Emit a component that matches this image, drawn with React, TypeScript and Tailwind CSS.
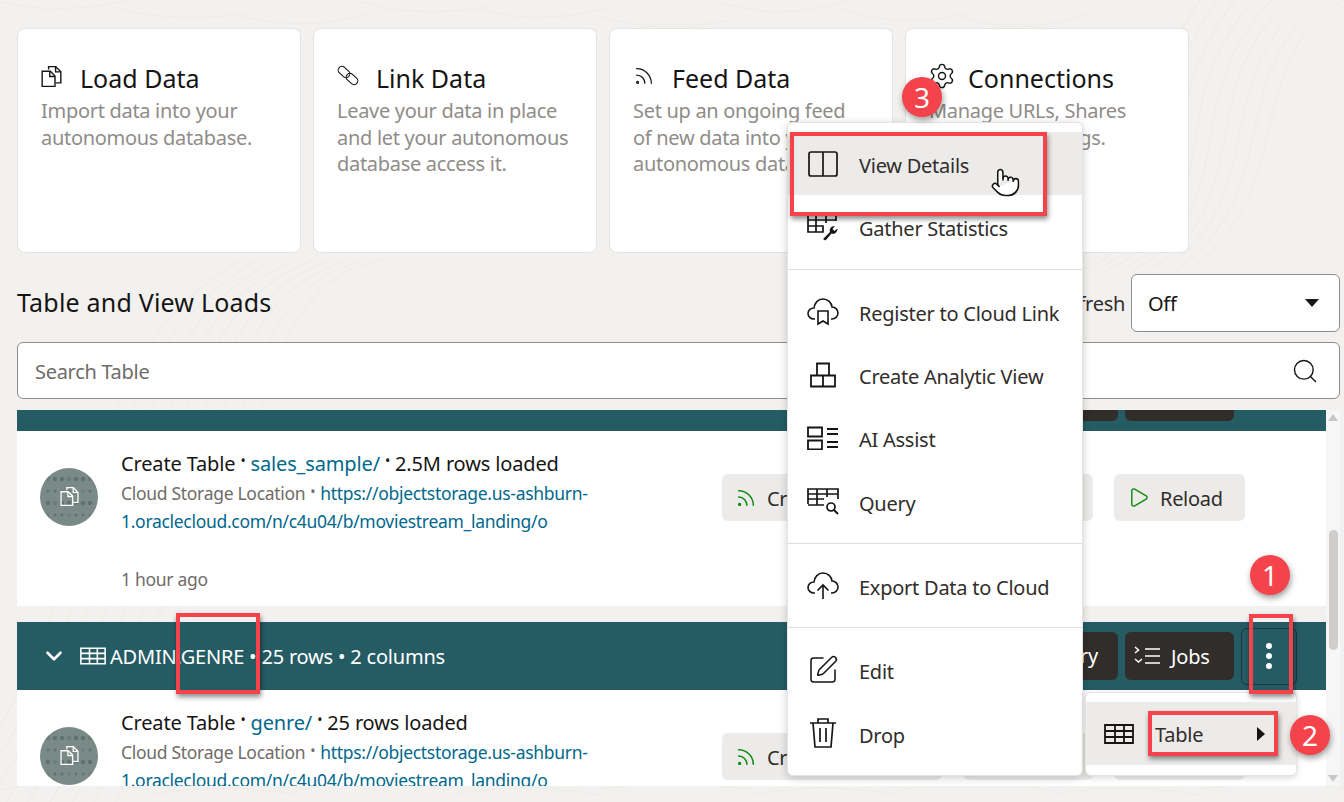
import React from "react";
import { Rss, Settings, SquarePen, Search, Play, ChevronDown, Pointer } from "lucide-react";

const Pages = ({ c = "currentColor", s = 22 }: { c?: string; s?: number }) => (
  <svg width={s} height={s} viewBox="2 2 17 18" fill="none" stroke={c} strokeWidth="1.200">
    <path d="M8 5V2.500h6l4.500 4.500v9.500H14" />
    <path d="M14 2.500V7h4.500" />
    <path d="M2.500 6.500h7l4 4v9h-11z" fill="none" />
    <path d="M9 6.500V11h4.500" />
  </svg>
);
const Link2 = () => (
  <svg width="24" height="24" viewBox="0 0 24 24" fill="none" stroke="#161513" strokeWidth="1.100">
    <rect x="0.500" y="4.250" width="13" height="7.500" rx="3.750" transform="rotate(42 7 8)" />
    <rect x="8.500" y="11.250" width="13" height="7.500" rx="3.750" transform="rotate(42 15 15)" />
  </svg>
);
const PanelIcon = () => (
  <svg width="30" height="26" viewBox="0 0 30 26" fill="none" stroke="#161513" strokeWidth="1.700">
    <rect x="1" y="1" width="28" height="24" rx="2" />
    <path d="M15 1v24" />
  </svg>
);
const TableWrench = () => (
  <svg width="32" height="30" viewBox="0 0 32 30" fill="none" stroke="#161513" strokeWidth="1.700">
    <path d="M1 14V2h28v7M1 8h28M1 14h15v6H1zM1 14v6M9 2v18M19 2v9" />
    <path d="M16 27l7-7c-1-3 1-6 5-6l-2.500 3 2 2 3-2.500c0 4-3 6-6 5l-6 7z" fill="#161513" stroke="none" />
  </svg>
);
const cloud = "M8 23H7C3.500 23 1 20.500 1 17.500S3.500 12 7 12c.5-5 4-9 9-9s8.500 3.500 9 8c3.500 0 6 3 6 6s-2.500 6-6 6h-1";
const CloudMark = () => (
  <svg width="32" height="30" viewBox="0 0 32 30" fill="none" stroke="#161513" strokeWidth="1.600">
    <path d={cloud} />
    <path d="M11 15h10v13l-5-3-5 3z" fill="#fff" />
  </svg>
);
const CloudUp = () => (
  <svg width="32" height="30" viewBox="0 0 32 30" fill="none" stroke="#161513" strokeWidth="1.600">
    <path d={cloud} />
    <path d="M16 29V15M10.500 20.500L16 15l5.500 5.500" />
  </svg>
);
const Blocks = () => (
  <svg width="26" height="26" viewBox="0 0 26 26" fill="none" stroke="#161513" strokeWidth="1.800">
    <path d="M7 1.500h12v12H7zM1 13.500h12v11H1zM13 13.500h12v11H13z" />
  </svg>
);
const AiIcon = () => (
  <svg width="32" height="24" viewBox="0 0 32 24" fill="none" stroke="#161513" strokeWidth="1.800">
    <path d="M1 1.500h14v9H1zM1 14.500h14v9H1z" />
    <path d="M20 3h11M20 8h11M20 16h11M20 21h11" />
  </svg>
);
const TableQuery = () => (
  <svg width="32" height="28" viewBox="0 0 32 28" fill="none" stroke="#161513" strokeWidth="1.700">
    <path d="M1 17V2h30v10M1 7h30M1 12h16M1 18h16M10 2v16M20 2v8" />
    <circle cx="24" cy="20" r="4" />
    <path d="M27 23l4 4" strokeWidth="2" />
  </svg>
);
const TrashIcon = () => (
  <svg width="28" height="32" viewBox="0 0 28 32" fill="none" stroke="#161513" strokeWidth="1.700">
    <path d="M1 6h26M9 6V2h10v4M4 6l2 24h16l2-24M11 11v14M17 11v14" />
  </svg>
);
const GridIcon = ({ c = "#161513", w = 30, h = 20 }: { c?: string; w?: number; h?: number }) => (
  <svg width={w} height={h} viewBox="0 0 30 20" fill="none" stroke={c} strokeWidth="1.800">
    <path d="M1 1h28v18H1zM1 7h28M1 13h28M11 1v18M20 1v18" />
  </svg>
);
const JobsIcon = () => (
  <svg width="26" height="22" viewBox="0 0 26 22" fill="none" stroke="#fff" strokeWidth="1.500">
    <path d="M1 2l3.500 3L1 8M1 14l3.500 3L8 14" />
    <path d="M11 4h15M11 11h15M11 18h15" />
  </svg>
);

const Avatar = () => (
  <div className="relative w-[58px] h-[58px] shrink-0 rounded-full bg-[#7a8a87] overflow-hidden flex items-center justify-center text-white">
    <svg className="absolute inset-0" width="58" height="58" viewBox="0 0 58 58" fill="#5f6e6b">
      {[11, 23, 35, 47].map((y, r) =>
        [8, 15, 22, 29, 36, 43, 50].map((x, i) => (
          <circle key={r + "-" + i} cx={x} cy={y} r={r % 2 ? 1.500 : 2.200} opacity={(i + r) % 3 ? 0.9 : 0.5} />
        ))
      )}
    </svg>
    <span className="relative -mt-[2px]"><Pages c="#fff" s={19} /></span>
  </div>
);

const Bullet = () => <span className="relative -top-[3px] mx-[5px] text-[14px] leading-none">•</span>;

const LightBtn = ({ w, icon, label }: { w: string; icon?: React.ReactNode; label: string }) => (
  <div className={`${w} h-[47px] flex items-center gap-[10px] rounded-[6px] bg-[#ecebe9] pl-[13px] text-[20px] tracking-[-0.3px] text-[#312d2a] whitespace-nowrap overflow-hidden`}>
    {icon}
    <span className="pt-[2px]">{label}</span>
  </div>
);

const Header = ({ children, kebab }: { children?: React.ReactNode; kebab?: boolean }) => (
  <div className="h-[68px] shrink-0 bg-[#255c64] flex items-center pl-[24px] pr-[29px] text-white">
    <ChevronDown size={26} strokeWidth={2.400} />
    <span className="ml-[13px] mr-[4px]"><GridIcon c="#fff" w={26} h={18} /></span>
    <span className="text-[20px] tracking-[-0.2px] whitespace-nowrap pt-[1px]">{children}</span>
    <div className="ml-auto flex items-center gap-[7px]">
      <div className="h-[48px] w-[110px] rounded-[6px] bg-[#312d2a] flex items-center justify-end pr-[20px] text-[20px] tracking-[-0.2px]">Query</div>
      <div className="h-[48px] w-[109px] rounded-[6px] bg-[#312d2a] flex items-center gap-[11px] pl-[9px] text-[20px] tracking-[-0.2px]">
        <JobsIcon />
        <span className="pt-[1px]">Jobs</span>
      </div>
      <div className={`h-[57px] w-[56px] rounded-[6px] border border-[#17383d] flex flex-col items-center justify-center gap-[4px] ${kebab ? "" : "invisible"}`}>
        <i className="w-[6px] h-[6px] rounded-full bg-white" />
        <i className="w-[6px] h-[6px] rounded-full bg-white" />
        <i className="w-[6px] h-[6px] rounded-full bg-white" />
      </div>
    </div>
  </div>
);

const Body = ({ link, rows }: { link: string; rows: string }) => (
  <div className="h-[175px] shrink-0 bg-white flex pl-[23px] pr-[81px] pt-[19px] relative">
    <div className="pt-[18px]"><Avatar /></div>
    <div className="ml-[23px] w-[600px]">
      <div className="h-[28px] flex items-center text-[20px] tracking-[-0.15px] text-[#161513] whitespace-nowrap">
        Create Table<Bullet /><span className="text-[#00688c]">{link}</span><Bullet />{rows}
      </div>
      <div className="pt-[1px] text-[17.500px] leading-[28px] w-[480px] text-[#6f6c69] tracking-[-0.3px]">
        Cloud Storage Location<Bullet /><span className="text-[#00688c] break-all">https://objectstorage.us-ashburn-</span>
        <div className="text-[#00688c]">1.oraclecloud.com/n/c4u04/b/moviestream_landing/o</div>
      </div>
      <div className="mt-[31px] text-[17.500px] text-[#6f6c69] tracking-[-0.3px]">1 hour ago</div>
    </div>
    <div className="ml-auto pt-[24px] flex gap-[21px] shrink-0">
      <LightBtn w="w-[220px]" icon={<Rss size={22} color="#118a11" strokeWidth={1.700} />} label="Create Live Feed" />
      <LightBtn w="w-[130px]" label="Reload" />
      <LightBtn w="w-[131px]" icon={<Play size={23} color="#118a11" strokeWidth={1.500} />} label="Reload" />
    </div>
  </div>
);

const Card = ({ icon, title, lines }: { icon: React.ReactNode; title: string; lines: string[] }) => (
  <div className="w-[284px] h-[225px] rounded-[8px] bg-white border border-[#e6e4e1] pl-[23px] pt-[34px]">
    <div className="flex items-center h-[32px] gap-[15px] text-[#161513] text-[25px]">
      <span className="-mt-[6px] w-[24px] h-[24px] flex items-center justify-start">{icon}</span>
      {title}
    </div>
    <div className="mt-[3px] text-[20px] leading-[26.500px] text-[#8f8c89] tracking-[-0.3px] whitespace-nowrap">
      {lines.map((l) => <div key={l}>{l}</div>)}
    </div>
  </div>
);

const Item = ({ icon, label, active }: { icon: React.ReactNode; label: string; active?: boolean }) => (
  <div className={`h-[63.300px] flex items-center pl-[19px] text-[20px] tracking-[-0.25px] text-[#312d2a] ${active ? "bg-[#ecebe9]" : ""}`}>
    <span className="w-[32px] flex justify-center">{icon}</span>
    <span className="ml-[20px] pt-[5px]">{label}</span>
  </div>
);

const Sep = () => <div className="my-[10px] h-[1px] bg-[#dfdedc]" />;

const Box = ({ c }: { c: string }) => (
  <div className={`absolute border-[4px] border-[#f4434a] shadow-[1px_3px_5px_rgba(0,0,0,0.45)] ${c}`} />
);
const Badge = ({ n, c }: { n: string; c: string }) => (
  <div className={`absolute w-[40px] h-[40px] rounded-full bg-[#f4434a] text-white text-[28px] flex items-center justify-center shadow-[1px_3px_6px_rgba(0,0,0,0.4)] ${c}`}>{n}</div>
);

export default function App() {
  return (
    <div className="relative w-[1344px] h-[802px] overflow-hidden bg-[#f2f1ef] font-['Noto_Sans',sans-serif] pl-[17px] pt-[28px]">
      <svg className="absolute inset-0" width="1344" height="802" fill="none" stroke="#eeedea" strokeWidth="1.500">
        {[0, 1, 2, 3, 4, 5, 6, 7, 8].map((i) => (
          <g key={i}>
            <path d={`M${-60 + i * 22} 802 C ${120 + i * 20} ${620 - i * 18}, ${40 + i * 25} ${380 - i * 12}, ${240 + i * 18} 260`} />
            <path d={`M${1344 - i * 18} 0 C ${1240 - i * 16} ${60 + i * 8}, ${1300 - i * 14} ${190 + i * 6}, ${1190 - i * 14} 270`} />
            <path d={`M${i * 120} ${2 + (i % 3) * 7} q 60 ${14 + i} 130 ${-2 + (i % 2) * 6}`} />
            <path d={`M${i * 150} ${790 + (i % 2) * 5} q 70 -14 150 0`} />
          </g>
        ))}
      </svg>

      <div className="relative">
        <div className="flex gap-[12px]">
          <Card icon={<Pages c="#161513" s={21} />} title="Load Data" lines={["Import data into your", "autonomous database."]} />
          <Card icon={<Link2 />} title="Link Data" lines={["Leave your data in place", "and let your autonomous", "database access it."]} />
          <Card icon={<Rss size={22} color="#161513" strokeWidth={1.400} />} title="Feed Data" lines={["Set up an ongoing feed", "of new data into your", "autonomous database."]} />
          <Card icon={<Settings size={28} color="#161513" strokeWidth={1.200} className="shrink-0 -ml-[1px]" />} title="Connections" lines={["Manage URLs, Shares", "and Cloud Settings."]} />
        </div>

        <div className="mt-[21px] w-[1323px] h-[58px] flex items-center">
          <h2 className="text-[25px] font-normal tracking-[0.2px] text-[#161513]">Table and View Loads</h2>
          <span className="ml-auto mr-[6px] pt-[1px] text-[20px] tracking-[-0.3px] text-[#312d2a]">Auto Refresh</span>
          <div className="w-[209px] h-[58px] rounded-[6px] bg-white border border-[#8f8c89] flex items-center pl-[16px] pr-[20px] text-[20px] tracking-[-0.3px] text-[#161513]">
            <span className="pt-[2px]">Off</span>
            <i className="ml-auto w-0 h-0 border-x-[7px] border-x-transparent border-t-[8px] border-t-[#161513]" />
          </div>
        </div>

        <div className="mt-[10px] w-[1323px] h-[57px] rounded-[6px] bg-white border border-[#8f8c89] flex items-center pl-[17px] pr-[20px] text-[20px] tracking-[-0.3px] text-[#6f6c69]">
          <span className="pt-[2px]">Search Table</span>
          <Search size={28} strokeWidth={1.200} color="#161513" className="ml-auto" />
        </div>

        <div className="mt-[11px] w-[1323px] h-[376px] flex overflow-hidden">
          <div className="w-[1309px] -mt-[47px] flex flex-col">
            <Header>ADMIN.SALES_SAMPLE • 2.5M rows • 8 columns</Header>
            <Body link="sales_sample/" rows="2.5M rows loaded" />
            <div className="h-[16px] shrink-0" />
            <Header kebab>ADMIN.GENRE • 25 rows • 2 columns</Header>
            <Body link="genre/" rows="25 rows loaded" />
          </div>
          <div className="w-[14px] bg-[#f6f6f6] flex flex-col items-center justify-between py-[4px] relative">
            <i className="w-0 h-0 border-x-[5px] border-x-transparent border-b-[7px] border-b-[#c8c7c5]" />
            <i className="absolute top-[120px] h-[120px] w-[9px] rounded-[5px] bg-[#cfcecc]" />
            <i className="w-0 h-0 border-x-[5px] border-x-transparent border-t-[7px] border-t-[#c8c7c5]" />
          </div>
        </div>
      </div>

      {/* popup menu */}
      <div className="absolute left-[787px] top-[122px] w-[296px] h-[654px] bg-white rounded-[6px] pt-[9px] border border-[#e6e4e1] shadow-[0_2px_8px_rgba(0,0,0,0.2)]">
        <Item active icon={<PanelIcon />} label="View Details" />
        <Item icon={<TableWrench />} label="Gather Statistics" />
        <Sep />
        <Item icon={<CloudMark />} label="Register to Cloud Link" />
        <Item icon={<Blocks />} label="Create Analytic View" />
        <Item icon={<AiIcon />} label="AI Assist" />
        <Item icon={<TableQuery />} label="Query" />
        <Sep />
        <Item icon={<CloudUp />} label="Export Data to Cloud" />
        <Sep />
        <Item icon={<SquarePen size={34} strokeWidth={1.150} color="#161513" />} label="Edit" />
        <Item icon={<TrashIcon />} label="Drop" />
      </div>

      {/* sub menu */}
      <div className="absolute left-[1085px] top-[692px] w-[212px] h-[84px] bg-white rounded-[6px] pt-[9px] border border-[#e6e4e1] shadow-[0_2px_6px_rgba(0,0,0,0.15)]">
        <div className="h-[63px] bg-[#ecebe9] flex items-center pl-[18px] pr-[31px] text-[20px] tracking-[-0.25px] text-[#312d2a]">
          <GridIcon />
          <span className="ml-[21px] pt-[2px]">Table</span>
          <i className="ml-auto w-0 h-0 border-y-[7px] border-y-transparent border-l-[8px] border-l-[#161513]" />
        </div>
      </div>

      <Pointer className="absolute left-[990px] top-[167px]" size={31} strokeWidth={1.200} color="#161513" fill="#fff" />

      <Box c="left-[790px] top-[132px] w-[257px] h-[84px]" />
      <Box c="left-[176px] top-[613px] w-[84px] h-[81px]" />
      <Box c="left-[1249px] top-[614px] w-[44px] h-[80px]" />
      <Box c="left-[1148px] top-[711px] w-[130px] h-[45px]" />
      <Badge n="1" c="left-[1250px] top-[555px]" />
      <Badge n="2" c="left-[1290px] top-[715px]" />
      <Badge n="3" c="left-[902px] top-[77px]" />
    </div>
  );
}
